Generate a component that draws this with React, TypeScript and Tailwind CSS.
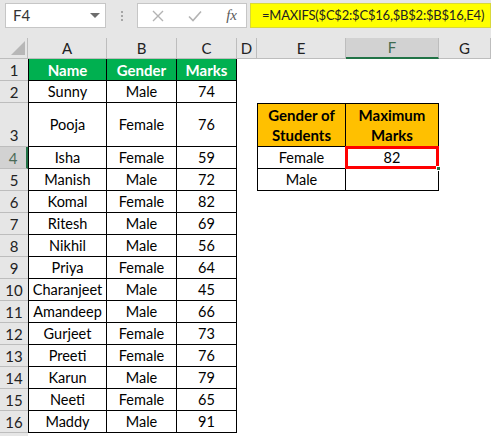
import React from "react";

interface Student {
  name: string;
  gender: string;
  marks: number;
}

let students: Student[] = [
  { name: "Sunny", gender: "Male", marks: 74 },
  { name: "Pooja", gender: "Female", marks: 76 },
  { name: "Isha", gender: "Female", marks: 59 },
  { name: "Manish", gender: "Male", marks: 72 },
  { name: "Komal", gender: "Female", marks: 82 },
  { name: "Ritesh", gender: "Male", marks: 69 },
  { name: "Nikhil", gender: "Male", marks: 56 },
  { name: "Priya", gender: "Female", marks: 64 },
  { name: "Charanjeet", gender: "Male", marks: 45 },
  { name: "Amandeep", gender: "Male", marks: 66 },
  { name: "Gurjeet", gender: "Female", marks: 73 },
  { name: "Preeti", gender: "Female", marks: 76 },
  { name: "Karun", gender: "Male", marks: 79 },
  { name: "Neeti", gender: "Female", marks: 65 },
  { name: "Maddy", gender: "Male", marks: 91 }
];

let columns = ["A", "B", "C", "D", "E", "F", "G"];

let FormulaBar = () => (
  <div className="h-[38px] bg-[#e6e6e6] flex items-start pt-[3px] pl-[5px]">
    <div className="w-[101px] h-[25px] bg-white border border-[#c6c6c6] flex items-center justify-between pl-[7px] pr-[5px] text-[#333]">
      <span className="text-[15px]">F4</span>
      <span className="w-0 h-0 border-l-[5px] border-r-[5px] border-t-[5px] border-l-transparent border-r-transparent border-t-[#6d6d6d]" />
    </div>
    <div className="w-[31px] h-[25px] flex flex-col items-center justify-center gap-[2px]">
      <span className="w-[2px] h-[2px] bg-[#a6a6a6]" />
      <span className="w-[2px] h-[2px] bg-[#a6a6a6]" />
      <span className="w-[2px] h-[2px] bg-[#a6a6a6]" />
    </div>
    <div className="w-[110px] h-[25px] bg-white border border-[#c6c6c6] flex items-center justify-between pl-[14px] pr-[9px]">
      <svg width="12" height="12" viewBox="0 0 12 12">
        <path d="M1 1 L11 11 M11 1 L1 11" stroke="#b3b3b3" strokeWidth="1.4" />
      </svg>
      <svg width="14" height="12" viewBox="0 0 14 12">
        <path d="M1 6.5 L5 10.5 L13 1.5" stroke="#b3b3b3" strokeWidth="1.6" fill="none" />
      </svg>
      <span className="text-[15px] italic text-[#5a5a5a] [font-family:'Liberation_Serif',serif]">fx</span>
    </div>
    <div className="ml-[3px] flex-1 h-[25px] bg-[#ffff00] border border-[#d8d83a] flex items-center pl-[11px] text-[13px] tracking-[-0.2px] text-[#222] whitespace-nowrap overflow-hidden">
      =MAXIFS($C$2:$C$16,$B$2:$B$16,E4)
    </div>
  </div>
);

let ColumnHeaders = () => (
  <div className="grid grid-cols-[28px_79px_70px_60px_20px_89px_93px_52px] h-[21px] leading-[19px]">
    <div className="relative bg-[#e6e6e6] border-r border-b border-[#bdbdbd]">
      <svg className="absolute right-[2px] bottom-[3px]" width="14" height="14" viewBox="0 0 14 14">
        <path d="M14 0 L14 14 L0 14 Z" fill="#b7b7b7" />
      </svg>
    </div>
    {columns.map((col) =>
      col === "F" ? (
        <div
          key={col}
          className="bg-[#d2d2d2] border-r border-[#bdbdbd] border-b-2 border-b-[#217346] flex items-center justify-center text-[15px] text-[#3f6b50]"
        >
          {col}
        </div>
      ) : (
        <div
          key={col}
          className="bg-[#e6e6e6] border-r border-b border-[#bdbdbd] flex items-center justify-center text-[15px] text-[#222]"
        >
          {col}
        </div>
      )
    )}
  </div>
);

let RowHeader = ({ n, tall, selected }: { n?: number; tall?: boolean; selected?: boolean }) => (
  <div
    className={
      selected
        ? "bg-[#d2d2d2] border-b border-b-[#bdbdbd] border-r-2 border-r-[#217346] flex items-center justify-center text-[15px] text-[#4b6b57]"
        : tall
        ? "bg-[#e6e6e6] border-b border-b-[#bdbdbd] flex items-end justify-center pb-[1px] text-[15px] text-[#222]"
        : "bg-[#e6e6e6] border-b border-b-[#bdbdbd] flex items-center justify-center text-[15px] text-[#222]"
    }
  >
    {n}
  </div>
);

let cell = "border-r border-b border-black flex items-center justify-center";

let App = () => {
  return (
    <div className="w-[491px] h-[436px] overflow-hidden bg-white text-black [font-family:Lato,'Liberation_Sans',sans-serif]">
      <FormulaBar />
      <ColumnHeaders />
      <div className="grid grid-cols-[28px_79px_70px_60px_20px_89px_93px_52px] grid-rows-[22px_22px_44px_repeat(14,22px)] leading-[20px] text-[14.5px]">
        {/* row 1 */}
        <RowHeader n={1} />
        <div className={"bg-[#00b050] border-l font-bold text-white text-[15px] " + cell}>Name</div>
        <div className={"bg-[#00b050] font-bold text-white text-[15px] " + cell}>Gender</div>
        <div className={"bg-[#00b050] font-bold text-white text-[15px] " + cell}>Marks</div>
        <div />
        <div />
        <div />
        <div />

        {students.map((s, i) => {
          let row = i + 2;
          return (
            <React.Fragment key={row}>
              <RowHeader n={row} tall={row === 3} selected={row === 4} />
              <div className={"border-l " + cell}>{s.name}</div>
              <div className={cell}>{s.gender}</div>
              <div className={cell}>{s.marks}</div>
              <div />
              {row === 3 && (
                <>
                  <div className={"bg-[#ffc000] border-l border-t text-center font-bold text-[15px] " + cell}>
                    Gender of
                    <br />
                    Students
                  </div>
                  <div className={"bg-[#ffc000] border-t text-center font-bold text-[15px] " + cell}>
                    Maximum
                    <br />
                    Marks
                  </div>
                </>
              )}
              {row === 4 && (
                <>
                  <div className={"border-l " + cell}>Female</div>
                  <div className={"relative " + cell}>
                    82
                    <div className="absolute -left-px -top-px -right-px -bottom-px border-[3px] border-[#ff0000]" />
                    <div className="absolute -right-[3px] -bottom-[3px] w-[5px] h-[5px] bg-[#217346] border border-white" />
                  </div>
                </>
              )}
              {row === 5 && (
                <>
                  <div className={"border-l " + cell}>Male</div>
                  <div className={cell} />
                </>
              )}
              {row !== 3 && row !== 4 && row !== 5 && (
                <>
                  <div />
                  <div />
                </>
              )}
              <div />
            </React.Fragment>
          );
        })}
        {/* row 17 is only a sliver at the bottom edge */}
        <RowHeader />
      </div>
    </div>
  );
};

export default App;
